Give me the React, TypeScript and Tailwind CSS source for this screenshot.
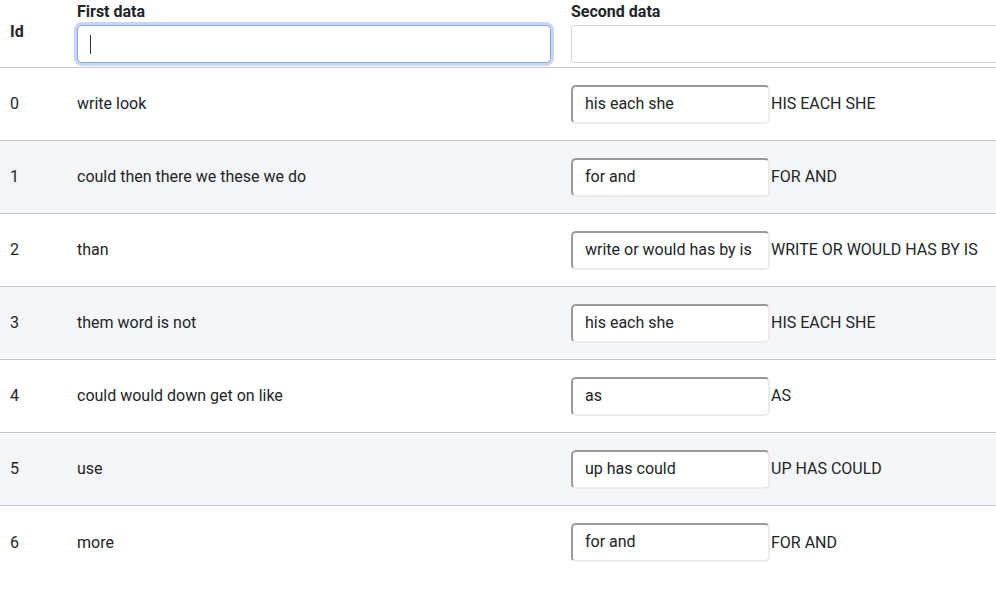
import React from 'react';

const rows = [
  { id: 0, first: 'write look', second: 'his each she' },
  { id: 1, first: 'could then there we these we do', second: 'for and' },
  { id: 2, first: 'than', second: 'write or would has by is' },
  { id: 3, first: 'them word is not', second: 'his each she' },
  { id: 4, first: 'could would down get on like', second: 'as' },
  { id: 5, first: 'use', second: 'up has could' },
  { id: 6, first: 'more', second: 'for and' },
];

export default function App() {
  return (
    <div className="w-[996px] h-[589px] overflow-hidden bg-white text-[#212529] font-['Roboto',sans-serif] text-[16px]">
      <div className="w-[1120px]">
        <div className="grid grid-cols-[67px_494px_1fr] h-[68px] border-b border-[#c3c8d3]">
          <div className="pl-[10px] flex items-center font-bold pb-[4px]">Id</div>
          <div className="px-[10px] flex flex-col">
            <span className="font-bold leading-[24px]">First data</span>
            <div className="relative mt-[1px]">
              <input
                className="w-full h-[38px] rounded-[5px] border border-[#86a3dd] ring-[3px] ring-[#c7d6f2] outline-none px-3 bg-white"
                defaultValue=""
              />
              <span className="absolute left-[13px] top-[10px] w-px h-[19px] bg-[#333]" />
            </div>
          </div>
          <div className="px-[10px] flex flex-col">
            <span className="font-bold leading-[24px]">Second data</span>
            <input
              className="mt-[1px] w-full h-[38px] rounded-[4px] border border-[#d4d4d4] outline-none px-3 bg-white"
              defaultValue=""
            />
          </div>
        </div>
        {rows.map((r, i) => (
          <div
            key={r.id}
            className={`grid grid-cols-[67px_494px_1fr] h-[73px] items-center ${i % 2 === 1 ? 'bg-[#f5f6fa]' : 'bg-white'} ${i < rows.length - 1 ? 'border-b border-[#c3c8d3]' : ''}`}
          >
            <div className="pl-[10px]">{r.id}</div>
            <div className="px-[10px]">{r.first}</div>
            <div className="pl-[10px] flex items-center">
              <input
                readOnly
                value={r.second}
                className="w-[199px] h-[39px] rounded-[5px] border-2 border-t-[#9a9a9a] border-l-[#9a9a9a] border-r-[#ececec] border-b-[#ececec] bg-white px-3 pb-[2px] outline-none text-[16px]"
              />
              <span className="ml-px">{r.second.toUpperCase()}</span>
            </div>
          </div>
        ))}
      </div>
    </div>
  );
}
